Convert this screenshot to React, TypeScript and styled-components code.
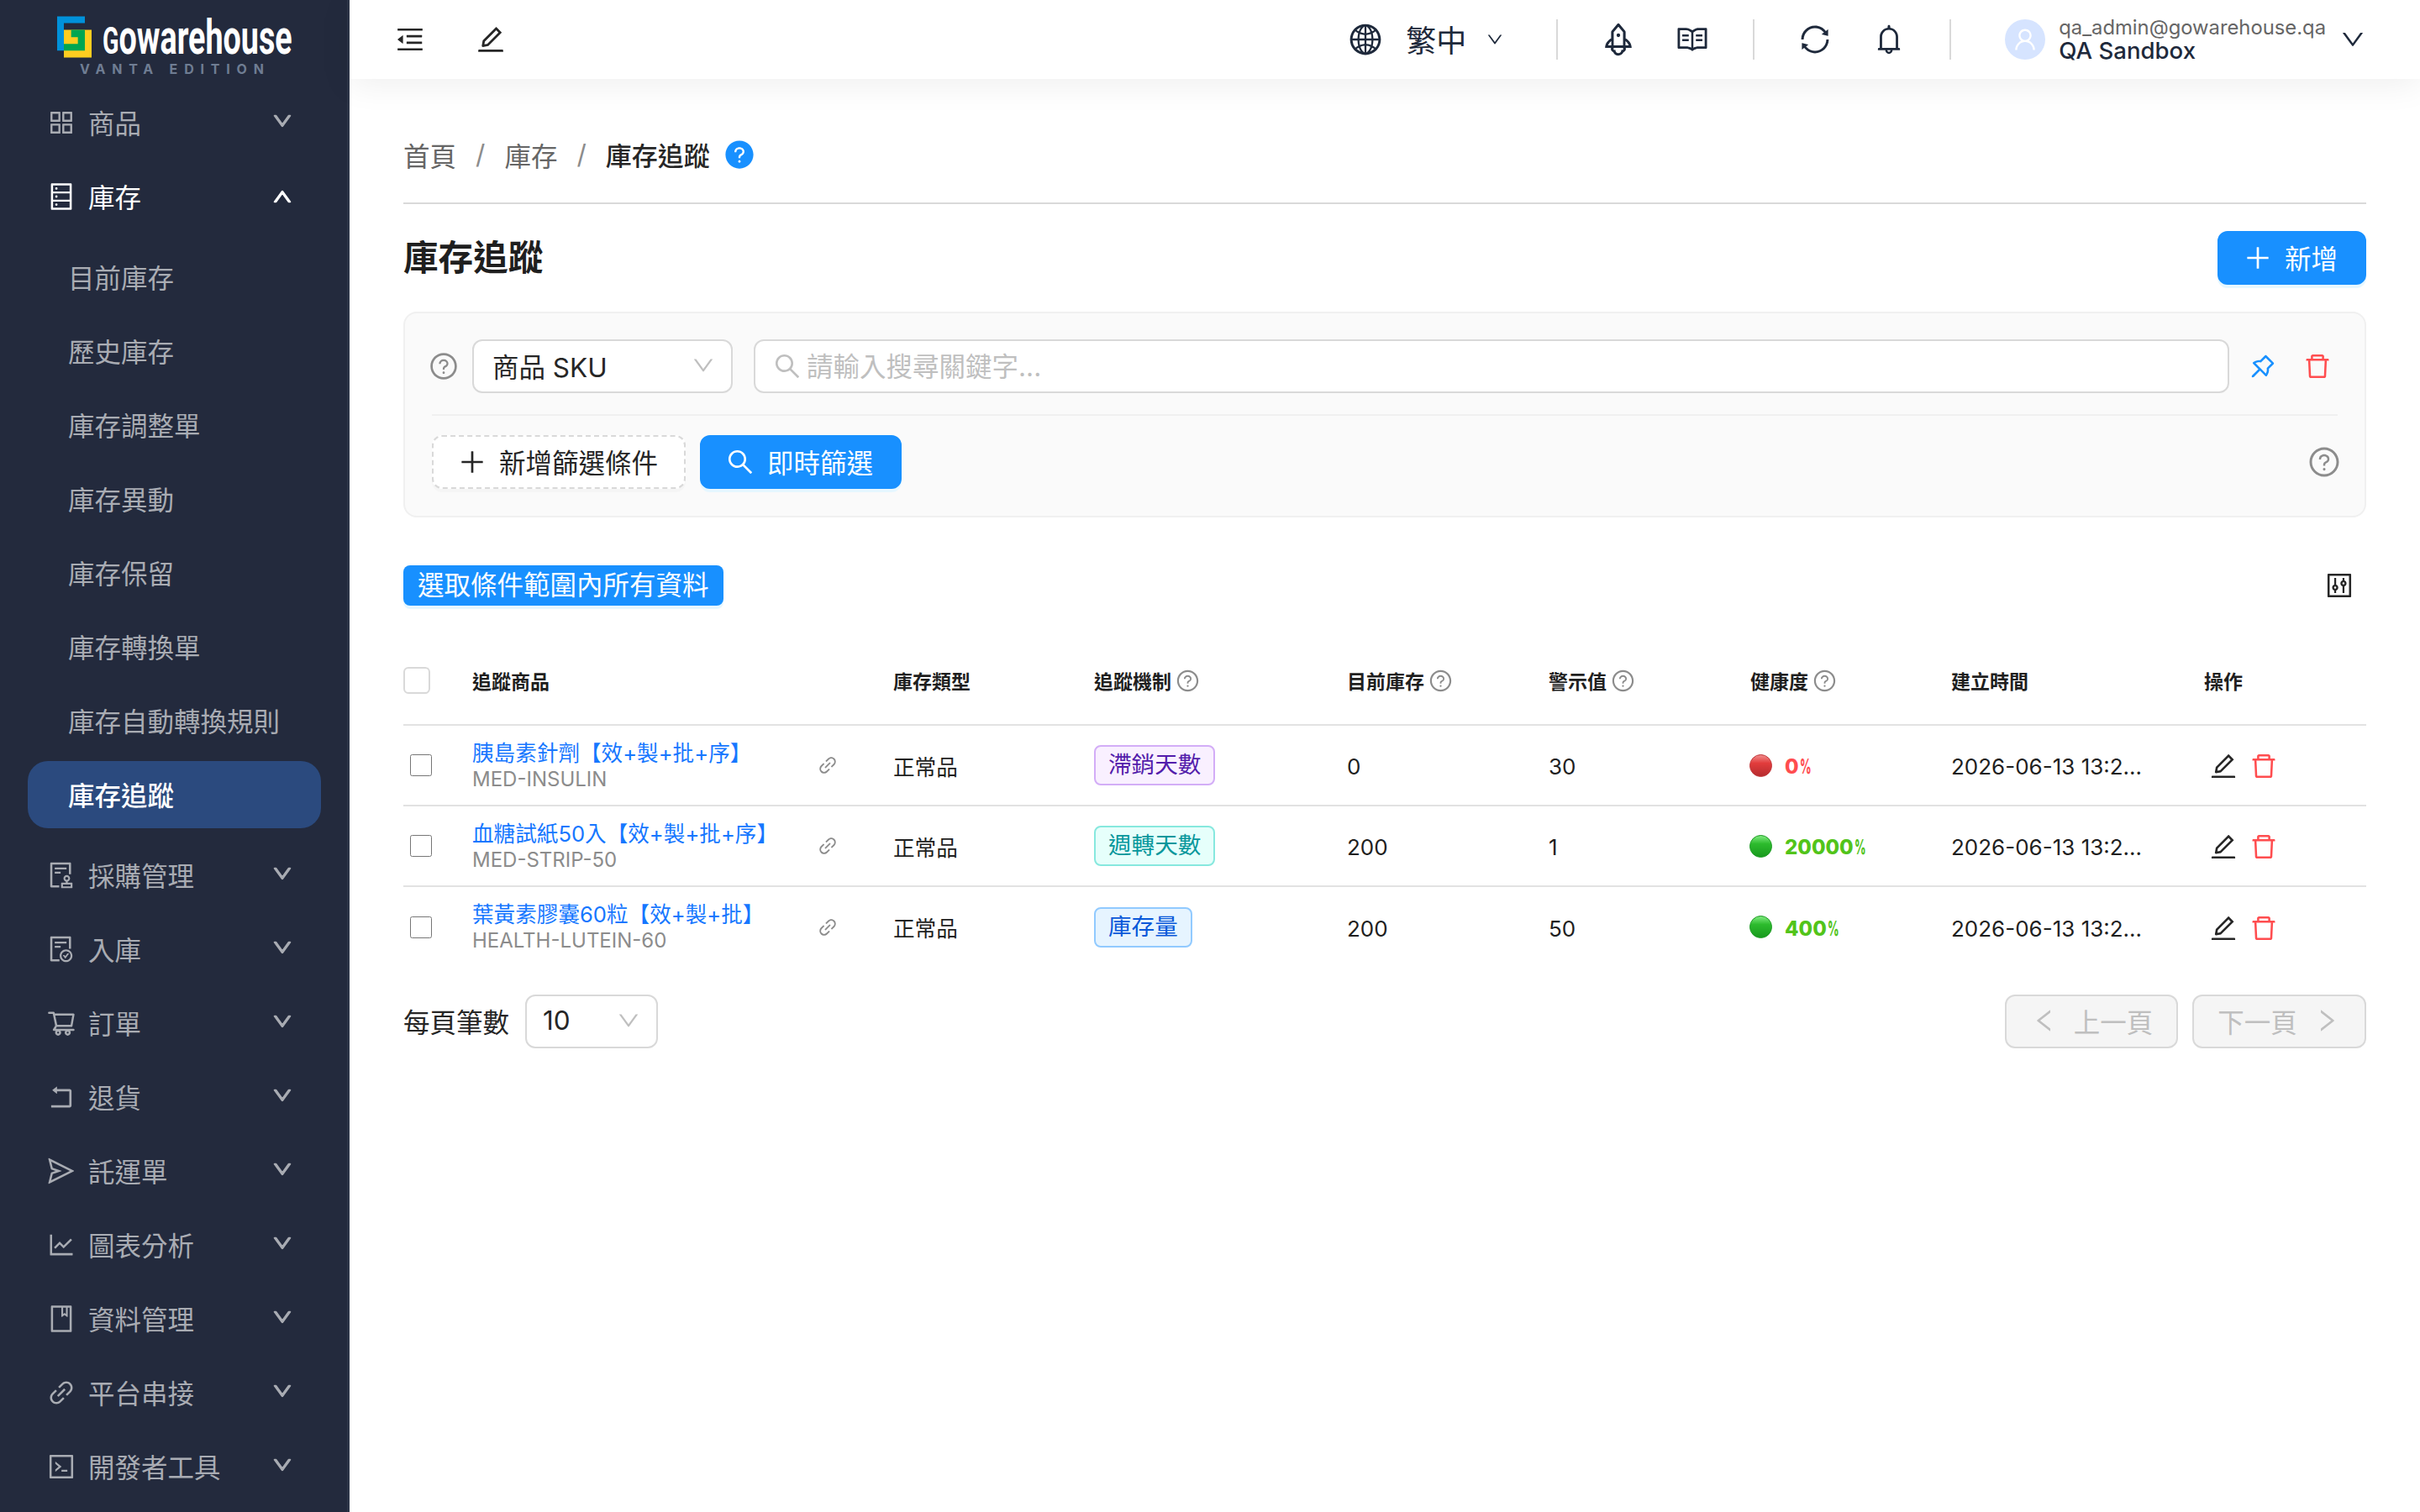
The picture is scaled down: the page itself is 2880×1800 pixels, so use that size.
import React from "react";
import styled, { createGlobalStyle } from "styled-components";
import type { IconType } from "react-icons";
import {
  AiFillQuestionCircle,
  AiOutlineAppstore,
  AiOutlineAudit,
  AiOutlineBell,
  AiOutlineBook,
  AiOutlineCode,
  AiOutlineControl,
  AiOutlineDatabase,
  AiOutlineDelete,
  AiOutlineDown,
  AiOutlineEdit,
  AiOutlineFileDone,
  AiOutlineGlobal,
  AiOutlineLeft,
  AiOutlineLineChart,
  AiOutlineLink,
  AiOutlineMenuFold,
  AiOutlinePlus,
  AiOutlinePushpin,
  AiOutlineQuestionCircle,
  AiOutlineRead,
  AiOutlineRight,
  AiOutlineRocket,
  AiOutlineRollback,
  AiOutlineSearch,
  AiOutlineSend,
  AiOutlineShoppingCart,
  AiOutlineSync,
  AiOutlineUp,
  AiOutlineUser,
} from "react-icons/ai";

const GlobalStyle = createGlobalStyle`
  html, body {
    margin: 0;
    padding: 0;
    background: #fff;
    font-family: Inter, "Noto Sans CJK TC", sans-serif;
    color: #1f1f1f;
  }
  * { box-sizing: border-box; }
`;

const Layout = styled.div`
  display: flex;
  width: 2880px;
  height: 1800px;
  overflow: hidden;
`;

/* sidebar */
const Sidebar = styled.aside`
  width: 416px;
  flex: none;
  padding: 0 31px 0 33px;
  background: #232a3d;
  border-right: 3px solid #2c3447;
`;
const LogoBlock = styled.div`
  height: 106px;
  padding: 19px 0 0 35px;
`;
const LogoRow = styled.div`
  display: flex;
  align-items: flex-start;
  gap: 13px;
  height: 52px;
`;
const LogoSvg = styled.svg`
  flex: none;
`;
const LogoText = styled.span`
  font-family: "Liberation Sans Narrow", Roboto, sans-serif;
  font-size: 58px;
  line-height: 50px;
  font-weight: 700;
  color: #fff;
  transform: scaleX(0.65);
  transform-origin: left center;
  white-space: nowrap;
  &::first-letter {
    text-transform: uppercase;
    font-size: 44px;
  }
`;
const LogoEdition = styled.div`
  margin: 3px 0 0 27px;
  font-size: 16px;
  line-height: 16px;
  font-weight: 700;
  letter-spacing: 7.8px;
  color: #6f7d93;
  white-space: nowrap;
`;
const MenuItem = styled.div<{ $active?: boolean }>`
  display: flex;
  align-items: center;
  gap: 14px;
  height: 80px;
  margin-bottom: 8px;
  padding: 0 33px 0 22px;
  font-size: 31.5px;
  color: ${(p) => (p.$active ? "#fff" : "#a9acb3")};
  svg.lead { flex: none; font-size: 36px; }
`;
const MenuLabel = styled.span`
  flex: 1;
  margin-bottom: 3px;
`;
const SubMenu = styled.div`
  padding: 8px 0;
`;
const SubItem = styled.div<{ $active?: boolean }>`
  display: flex;
  align-items: center;
  height: 80px;
  margin-bottom: 8px;
  padding: 0 0 3px 48px;
  border-radius: 24px;
  font-size: 31.5px;
  font-weight: ${(p) => (p.$active ? 500 : 400)};
  color: ${(p) => (p.$active ? "#fff" : "#a9acb3")};
  background: ${(p) => (p.$active ? "#2b4a7e" : "transparent")};
`;
const ChevDown = styled(AiOutlineDown)`
  flex: none;
  font-size: 26px;
  stroke: currentColor;
  stroke-width: 50;
  margin-top: -4px;
`;
const ChevUp = styled(AiOutlineUp)`
  flex: none;
  font-size: 26px;
  stroke: currentColor;
  stroke-width: 50;
`;

/* top bar */
const Main = styled.div`
  flex: 1;
  min-width: 0;
  display: flex;
  flex-direction: column;
`;
const TopBar = styled.header`
  position: relative;
  z-index: 1;
  display: flex;
  align-items: center;
  flex: none;
  height: 94px;
  padding: 0 64px 0 53px;
  background: #fff;
  box-shadow: 0 6px 40px rgba(0, 0, 0, 0.07);
  color: #1e293b;
`;
const TopLeft = styled.div`
  display: flex;
  align-items: center;
  gap: 58px;
  font-size: 38px;
  color: #262626;
`;
const TopRight = styled.div`
  display: flex;
  align-items: center;
  gap: 52px;
  margin-left: auto;
`;
const LangPick = styled.div`
  display: flex;
  align-items: center;
  margin-right: 10px;
  font-size: 36px;
  svg.globe { font-size: 42px; margin-right: 27px; }
  svg.arrow { font-size: 22px; margin-left: 23px; }
`;
const LangText = styled.span`
  margin-bottom: 3px;
`;
const VBar = styled.span`
  width: 2px;
  height: 48px;
  background: #d9d9d9;
`;
const ToolGroup = styled.div`
  display: flex;
  align-items: center;
  gap: 48px;
  font-size: 40px;
`;
const RocketIcon = styled(AiOutlineRocket)`
  font-size: 46px;
  margin: 0 -3px;
`;
const UserBox = styled.div`
  display: flex;
  align-items: center;
  margin-left: 12px;
  svg.arrow { font-size: 32px; margin-left: 16px; }
`;
const Avatar = styled.span`
  display: flex;
  align-items: center;
  justify-content: center;
  width: 48px;
  height: 48px;
  margin-right: 16px;
  border-radius: 50%;
  background: #d6e4ff;
  color: #fff;
  font-size: 32px;
`;
const UserText = styled.div`
  display: flex;
  flex-direction: column;
`;
const UserMail = styled.span`
  font-size: 23.8px;
  line-height: 26px;
  color: #666;
`;
const UserName = styled.span`
  font-size: 27.6px;
  line-height: 28px;
  font-weight: 500;
  color: #1e293b;
`;

/* page */
const Content = styled.main`
  flex: 1;
  padding: 66px 64px 0;
`;
const Crumbs = styled.nav`
  display: flex;
  align-items: center;
  height: 50px;
  padding-bottom: 3px;
  font-size: 31.5px;
  color: #666;
`;
const CrumbSlash = styled.span`
  margin: 0 23px;
  color: #8c8c8c;
`;
const CrumbNow = styled.span`
  font-size: 31px;
  font-weight: 500;
  color: #262626;
`;
const CrumbHelp = styled(AiFillQuestionCircle)`
  margin-left: 16px;
  font-size: 38px;
  color: #1890ff;
`;
const Rule = styled.div`
  height: 2px;
  margin-top: 31px;
  background: #d9d9d9;
`;
const TitleRow = styled.div`
  display: flex;
  align-items: center;
  justify-content: space-between;
  margin-top: 32px;
`;
const Title = styled.h1`
  margin: 0;
  font-size: 41.6px;
  line-height: 64px;
  font-weight: 700;
  color: #1f1f1f;
`;
const Button = styled.button<{ $dashed?: boolean }>`
  display: inline-flex;
  align-items: center;
  height: 64px;
  padding: 0 ${(p) => (p.$dashed ? 31 : 32)}px 0 28px;
  gap: 14px;
  font-family: inherit;
  font-size: 31.5px;
  border-radius: 12px;
  color: ${(p) => (p.$dashed ? "#262626" : "#fff")};
  background: ${(p) => (p.$dashed ? "#fff" : "#1890ff")};
  border: 2px ${(p) => (p.$dashed ? "dashed #d9d9d9" : "solid #1890ff")};
  box-shadow: 0 4px 0 ${(p) => (p.$dashed ? "rgba(0,0,0,.02)" : "#e6f7ff")};
  svg { font-size: 36px; }
`;
const ButtonText = styled.span`
  margin-bottom: 3px;
`;
const FilterCard = styled.section`
  margin-top: 32px;
  height: 245px;
  padding: 31px 32px 0;
  background: #fafafa;
  border: 2px solid #f0f0f0;
  border-radius: 16px;
`;
const FilterRow = styled.div`
  display: flex;
  align-items: center;
  height: 64px;
`;
const HelpIcon = styled(AiOutlineQuestionCircle)<{ $size: number }>`
  flex: none;
  font-size: ${(p) => p.$size}px;
  color: #8c8c8c;
`;
const LeadHelp = styled(HelpIcon)`
  margin: 0 16px 0 -4px;
`;
const EndHelp = styled(HelpIcon)`
  margin-right: -4px;
`;
const SelectBox = styled.div<{ $w: number; $pad: number }>`
  display: flex;
  align-items: center;
  justify-content: space-between;
  flex: none;
  width: ${(p) => p.$w}px;
  height: 64px;
  padding: 0 18px 3px ${(p) => p.$pad}px;
  background: #fff;
  border: 2px solid #d9d9d9;
  border-radius: 12px;
  font-size: 31.5px;
  color: #262626;
  svg { font-size: 30px; color: #bfbfbf; }
`;
const SearchBox = styled.label`
  display: flex;
  align-items: center;
  flex: 1;
  gap: 5px;
  height: 64px;
  margin-left: 25px;
  padding: 0 20px;
  background: #fff;
  border: 2px solid #d9d9d9;
  border-radius: 12px;
  svg { flex: none; font-size: 36px; color: #bfbfbf; }
`;
const SearchInput = styled.input`
  flex: 1;
  min-width: 0;
  border: 0;
  outline: 0;
  padding: 0;
  background: transparent;
  font-family: inherit;
  font-size: 31.5px;
  &::placeholder { color: #bfbfbf; opacity: 1; }
`;
const RowAction = styled.span<{ $tone: string; $left: number; $right?: number }>`
  display: flex;
  flex: none;
  margin: 0 ${(p) => p.$right ?? 0}px 0 ${(p) => p.$left}px;
  font-size: 36px;
  color: ${(p) => p.$tone};
`;
const FilterRule = styled.div`
  height: 2px;
  margin: 25px 0 23px;
  background: #f0f0f0;
`;
const FilterActions = styled.div`
  display: flex;
  align-items: center;
  gap: 17px;
  height: 64px;
`;
const ActionsEnd = styled.span`
  display: flex;
  margin-left: auto;
`;
const Toolbar = styled.div`
  display: flex;
  align-items: center;
  justify-content: space-between;
  height: 48px;
  margin-top: 57px;
`;
const SelectAll = styled.button`
  height: 48px;
  padding: 0 17px;
  border: 0;
  border-radius: 8px;
  background: #1890ff;
  color: #fff;
  font-family: inherit;
  font-size: 31.5px;
  line-height: 46px;
  box-shadow: 0 4px 0 #e6f7ff;
`;
const ColumnsIcon = styled(AiOutlineControl)`
  margin-right: 14px;
  font-size: 36px;
  color: #262626;
`;

/* table */
const Table = styled.table`
  width: 100%;
  margin-top: 42px;
  border-collapse: collapse;
  table-layout: fixed;
`;
const HeadCell = styled.th<{ $w: number }>`
  width: ${(p) => p.$w}px;
  height: 100px;
  padding: 0 0 6px;
  border-bottom: 2px solid #e2e2e2;
  text-align: left;
  font-size: 23px;
  font-weight: 600;
  color: #1f1f1f;
`;
const HeadInner = styled.span`
  display: inline-flex;
  align-items: center;
  gap: 5px;
  svg { font-size: 29px; margin-top: 2px; color: #8c8c8c; }
`;
const HeadCheck = styled.span`
  display: block;
  width: 32px;
  height: 32px;
  background: #fff;
  border: 2px solid #d9d9d9;
  border-radius: 6px;
`;
const BodyRow = styled.tr`
  height: 96px;
  border-bottom: 2px solid #e2e2e2;
  &:last-child { border-bottom: 0; }
`;
const Cell = styled.td`
  padding: 0;
  font-size: 26px;
  color: #1f1f1f;
  vertical-align: middle;
  white-space: nowrap;
`;
const ValueCell = styled(Cell)`
  padding-top: 3px;
`;
const PlainText = styled.span`
  font-size: 25.6px;
`;
const RowCheck = styled.input`
  display: block;
  width: 26px;
  height: 26px;
  margin: 0 0 0 8px;
`;
const ProductCell = styled.div`
  display: flex;
  align-items: center;
  justify-content: space-between;
  width: 436px;
  svg { flex: none; font-size: 26px; color: #8c8c8c; }
`;
const ProductText = styled.div`
  margin-top: 2px;
`;
const ProductName = styled.a`
  display: block;
  font-size: 25.6px;
  line-height: 31px;
  color: #1677ff;
`;
const ProductSku = styled.div`
  font-size: 24px;
  line-height: 32px;
  color: #8c8c8c;
`;
const tagTones = {
  purple: { bg: "#f9f0ff", line: "#d3adf7", text: "#531dab" },
  cyan: { bg: "#e6fffb", line: "#87e8de", text: "#08979c" },
  blue: { bg: "#e6f4ff", line: "#91caff", text: "#0958d9" },
};
type TagTone = keyof typeof tagTones;
const Tag = styled.span<{ $tone: TagTone }>`
  display: inline-block;
  height: 48px;
  padding: 0 15px;
  font-size: 27.6px;
  line-height: 42px;
  border-radius: 8px;
  border: 2px solid ${(p) => tagTones[p.$tone].line};
  background: ${(p) => tagTones[p.$tone].bg};
  color: ${(p) => tagTones[p.$tone].text};
`;
const Health = styled.div<{ $ok: boolean }>`
  display: flex;
  align-items: center;
  gap: 15px;
  margin-left: -1px;
  font-size: 24px;
  font-weight: 800;
  color: ${(p) => (p.$ok ? "#52c41a" : "#ff4d4f")};
`;
const Ball = styled.span<{ $ok: boolean }>`
  width: 27px;
  height: 27px;
  border-radius: 50%;
  border: 1px solid ${(p) => (p.$ok ? "#1f9c26" : "#c23a3d")};
  background: ${(p) =>
    p.$ok
      ? "linear-gradient(180deg,#7fea7f 0%,#2dbb2d 38%,#189a1e 100%)"
      : "linear-gradient(180deg,#f08b8b 0%,#e23c3c 38%,#b62c2f 100%)"};
`;
const HealthValue = styled.span`
  display: inline-flex;
  align-items: baseline;
  margin-top: 3px;
`;
const Pct = styled.span`
  display: inline-block;
  width: 13px;
  margin-left: 1px;
  transform: scaleX(0.55);
  transform-origin: left center;
`;
const RowTools = styled.div`
  display: flex;
  align-items: center;
  gap: 12px;
  padding: 2px 0 0 5px;
  font-size: 36px;
`;
const EditIcon = styled(AiOutlineEdit)`
  color: #262626;
`;
const TrashIcon = styled(AiOutlineDelete)`
  color: #ff4d4f;
`;

/* pagination */
const Pager = styled.div`
  display: flex;
  align-items: center;
  margin-top: 33px;
  font-size: 31.5px;
  color: #262626;
`;
const PagerLabel = styled.span`
  margin: 0 19px 3px 0;
`;
const PagerNav = styled.div`
  display: flex;
  gap: 17px;
  margin-left: auto;
`;
const PagerButton = styled.button<{ $w: number }>`
  display: inline-flex;
  align-items: center;
  justify-content: center;
  gap: 18px;
  width: ${(p) => p.$w}px;
  height: 64px;
  padding: 0 0 3px;
  background: #f5f5f5;
  border: 2px solid #d9d9d9;
  border-radius: 12px;
  color: #bfbfbf;
  font-family: inherit;
  font-size: 31.5px;
  svg { font-size: 34px; }
`;

const mainMenuTop: { icon: IconType; label: string; open?: boolean }[] = [
  { icon: AiOutlineAppstore, label: "商品" },
  { icon: AiOutlineDatabase, label: "庫存", open: true },
];
const stockMenu = [
  "目前庫存",
  "歷史庫存",
  "庫存調整單",
  "庫存異動",
  "庫存保留",
  "庫存轉換單",
  "庫存自動轉換規則",
  "庫存追蹤",
];
const mainMenuBottom: { icon: IconType; label: string }[] = [
  { icon: AiOutlineAudit, label: "採購管理" },
  { icon: AiOutlineFileDone, label: "入庫" },
  { icon: AiOutlineShoppingCart, label: "訂單" },
  { icon: AiOutlineRollback, label: "退貨" },
  { icon: AiOutlineSend, label: "託運單" },
  { icon: AiOutlineLineChart, label: "圖表分析" },
  { icon: AiOutlineBook, label: "資料管理" },
  { icon: AiOutlineLink, label: "平台串接" },
  { icon: AiOutlineCode, label: "開發者工具" },
];
const rows: {
  name: string;
  sku: string;
  tag: string;
  tone: TagTone;
  stock: number;
  alert: number;
  health: string;
  ok: boolean;
}[] = [
  { name: "胰島素針劑【效+製+批+序】", sku: "MED-INSULIN", tag: "滯銷天數", tone: "purple", stock: 0, alert: 30, health: "0", ok: false },
  { name: "血糖試紙50入【效+製+批+序】", sku: "MED-STRIP-50", tag: "週轉天數", tone: "cyan", stock: 200, alert: 1, health: "20000", ok: true },
  { name: "葉黃素膠囊60粒【效+製+批】", sku: "HEALTH-LUTEIN-60", tag: "庫存量", tone: "blue", stock: 200, alert: 50, health: "400", ok: true },
];

const LogoMark = () => (
  <LogoSvg width="41" height="50" viewBox="204 58 123 147">
    <polygon fill="#0091da" points="204,58 303,58 303,82 228,82 228,180 204,180" />
    <rect fill="#ffcd20" x="228" y="106" width="99" height="99" />
    <polygon fill="#00a651" points="254,106 303,106 303,180 228,180 228,156 278,156 278,132 254,132" />
  </LogoSvg>
);

const App: React.FC = () => {
  return (
    <Layout>
      <GlobalStyle />
      <Sidebar>
        <LogoBlock>
          <LogoRow>
            <LogoMark />
            <LogoText>gowarehouse</LogoText>
          </LogoRow>
          <LogoEdition>VANTA EDITION</LogoEdition>
        </LogoBlock>
        {mainMenuTop.map((m) => (
          <MenuItem key={m.label} $active={m.open}>
            <m.icon className="lead" />
            <MenuLabel>{m.label}</MenuLabel>
            {m.open ? <ChevUp /> : <ChevDown />}
          </MenuItem>
        ))}
        <SubMenu>
          {stockMenu.map((label) => (
            <SubItem key={label} $active={label === "庫存追蹤"}>
              {label}
            </SubItem>
          ))}
        </SubMenu>
        {mainMenuBottom.map((m) => (
          <MenuItem key={m.label}>
            <m.icon className="lead" />
            <MenuLabel>{m.label}</MenuLabel>
            <ChevDown />
          </MenuItem>
        ))}
      </Sidebar>
      <Main>
        <TopBar>
          <TopLeft>
            <AiOutlineMenuFold />
            <AiOutlineEdit />
          </TopLeft>
          <TopRight>
            <LangPick>
              <AiOutlineGlobal className="globe" />
              <LangText>繁中</LangText>
              <AiOutlineDown className="arrow" />
            </LangPick>
            <VBar />
            <ToolGroup>
              <RocketIcon />
              <AiOutlineRead />
            </ToolGroup>
            <VBar />
            <ToolGroup>
              <AiOutlineSync />
              <AiOutlineBell />
            </ToolGroup>
            <VBar />
            <UserBox>
              <Avatar>
                <AiOutlineUser />
              </Avatar>
              <UserText>
                <UserMail>qa_admin@gowarehouse.qa</UserMail>
                <UserName>QA Sandbox</UserName>
              </UserText>
              <AiOutlineDown className="arrow" />
            </UserBox>
          </TopRight>
        </TopBar>
        <Content>
          <Crumbs>
            首頁
            <CrumbSlash>/</CrumbSlash>
            庫存
            <CrumbSlash>/</CrumbSlash>
            <CrumbNow>庫存追蹤</CrumbNow>
            <CrumbHelp />
          </Crumbs>
          <Rule />
          <TitleRow>
            <Title>庫存追蹤</Title>
            <Button>
              <AiOutlinePlus />
              <ButtonText>新增</ButtonText>
            </Button>
          </TitleRow>
          <FilterCard>
            <FilterRow>
              <LeadHelp $size={36} />
              <SelectBox $w={310} $pad={22}>
                商品 SKU
                <AiOutlineDown />
              </SelectBox>
              <SearchBox>
                <AiOutlineSearch />
                <SearchInput placeholder="請輸入搜尋關鍵字..." />
              </SearchBox>
              <RowAction $tone="#1890ff" $left={22}>
                <AiOutlinePushpin />
              </RowAction>
              <RowAction $tone="#ff4d4f" $left={29} $right={6}>
                <AiOutlineDelete />
              </RowAction>
            </FilterRow>
            <FilterRule />
            <FilterActions>
              <Button $dashed>
                <AiOutlinePlus />
                <ButtonText>新增篩選條件</ButtonText>
              </Button>
              <Button>
                <AiOutlineSearch />
                <ButtonText>即時篩選</ButtonText>
              </Button>
              <ActionsEnd>
                <EndHelp $size={40} />
              </ActionsEnd>
            </FilterActions>
          </FilterCard>
          <Toolbar>
            <SelectAll>選取條件範圍內所有資料</SelectAll>
            <ColumnsIcon />
          </Toolbar>
          <Table>
            <thead>
              <tr>
                <HeadCell $w={82}>
                  <HeadCheck />
                </HeadCell>
                <HeadCell $w={501}>追蹤商品</HeadCell>
                <HeadCell $w={239}>庫存類型</HeadCell>
                <HeadCell $w={301}>
                  <HeadInner>
                    追蹤機制
                    <AiOutlineQuestionCircle />
                  </HeadInner>
                </HeadCell>
                <HeadCell $w={240}>
                  <HeadInner>
                    目前庫存
                    <AiOutlineQuestionCircle />
                  </HeadInner>
                </HeadCell>
                <HeadCell $w={240}>
                  <HeadInner>
                    警示值
                    <AiOutlineQuestionCircle />
                  </HeadInner>
                </HeadCell>
                <HeadCell $w={239}>
                  <HeadInner>
                    健康度
                    <AiOutlineQuestionCircle />
                  </HeadInner>
                </HeadCell>
                <HeadCell $w={301}>建立時間</HeadCell>
                <HeadCell $w={193}>操作</HeadCell>
              </tr>
            </thead>
            <tbody>
              {rows.map((r) => (
                <BodyRow key={r.sku}>
                  <Cell>
                    <RowCheck type="checkbox" />
                  </Cell>
                  <Cell>
                    <ProductCell>
                      <ProductText>
                        <ProductName>{r.name}</ProductName>
                        <ProductSku>{r.sku}</ProductSku>
                      </ProductText>
                      <AiOutlineLink />
                    </ProductCell>
                  </Cell>
                  <Cell>
                    <PlainText>正常品</PlainText>
                  </Cell>
                  <Cell>
                    <Tag $tone={r.tone}>{r.tag}</Tag>
                  </Cell>
                  <ValueCell>{r.stock}</ValueCell>
                  <ValueCell>{r.alert}</ValueCell>
                  <Cell>
                    <Health $ok={r.ok}>
                      <Ball $ok={r.ok} />
                      <HealthValue>
                        {r.health}
                        <Pct>%</Pct>
                      </HealthValue>
                    </Health>
                  </Cell>
                  <ValueCell>2026-06-13 13:2...</ValueCell>
                  <Cell>
                    <RowTools>
                      <EditIcon />
                      <TrashIcon />
                    </RowTools>
                  </Cell>
                </BodyRow>
              ))}
            </tbody>
          </Table>
          <Pager>
            <PagerLabel>每頁筆數</PagerLabel>
            <SelectBox $w={158} $pad={19}>
              10
              <AiOutlineDown />
            </SelectBox>
            <PagerNav>
              <PagerButton disabled $w={206}>
                <AiOutlineLeft />
                上一頁
              </PagerButton>
              <PagerButton disabled $w={207}>
                下一頁
                <AiOutlineRight />
              </PagerButton>
            </PagerNav>
          </Pager>
        </Content>
      </Main>
    </Layout>
  );
};

export default App;
